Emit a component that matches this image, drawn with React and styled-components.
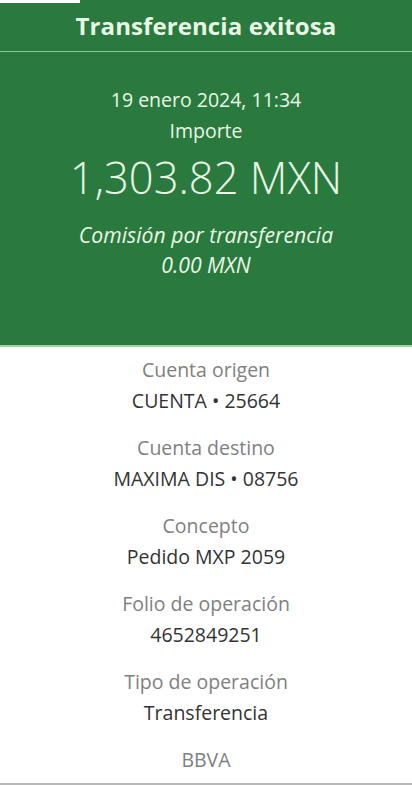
import React from 'react'
import styled, { createGlobalStyle } from 'styled-components'

const GlobalStyle = createGlobalStyle`
  html, body {
    margin: 0;
    padding: 0;
    background: #fff;
  }
  body {
    font-family: 'Open Sans', 'Liberation Sans', sans-serif;
  }
`

const Page = styled.div`
  width: 412px;
  height: 785px;
  display: flex;
  flex-direction: column;
  background: #fff;
  overflow: hidden;
  border-bottom: 2px solid #b8b8b8;
  box-sizing: border-box;
`

const Hero = styled.section`
  position: relative;
  background: #2a7a3f;
  color: #e9f8e4;
  border-bottom: 2px solid #9fd3a0;
  height: 347px;
  box-sizing: border-box;
  display: flex;
  flex-direction: column;
  align-items: center;
`

const Notch = styled.div`
  position: absolute;
  top: 0;
  left: 0;
  width: 80px;
  height: 3px;
  background: #fff;
`

const TitleBar = styled.header`
  align-self: stretch;
  height: 51px;
  border-bottom: 1px solid #8fc596;
  display: flex;
  align-items: center;
  justify-content: center;
  font-size: 24px;
  font-weight: 700;
  letter-spacing: 0.1px;
`

const Line = styled.div`
  font-size: ${(p) => p.$size || 19.5}px;
  font-weight: ${(p) => p.$weight || 400};
  font-style: ${(p) => (p.$italic ? 'italic' : 'normal')};
  line-height: ${(p) => p.$lh || 30}px;
  margin-top: ${(p) => p.$mt || 0}px;
`

const Details = styled.section`
  display: flex;
  flex-direction: column;
  align-items: center;
  padding-top: 8px;
`

const Field = styled.div`
  display: flex;
  flex-direction: column;
  align-items: center;
  height: 78px;
`

const Label = styled.div`
  font-size: 19.5px;
  line-height: 30px;
  color: #808080;
  font-weight: 400;
`

const Value = styled.div`
  font-size: 19.5px;
  line-height: 32px;
  color: #333;
`

const fields = [
  ['Cuenta origen', 'CUENTA • 25664'],
  ['Cuenta destino', 'MAXIMA DIS • 08756'],
  ['Concepto', 'Pedido MXP 2059'],
  ['Folio de operación', '4652849251'],
  ['Tipo de operación', 'Transferencia'],
]

export default function App() {
  return (
    <>
      <GlobalStyle />
      <Page>
        <Hero>
          <Notch />
          <TitleBar>Transferencia exitosa</TitleBar>
          <Line $mt={33}>19 enero 2024, 11:34</Line>
          <Line $mt={1}>Importe</Line>
          <Line $size={43.5} $weight={300} $lh={56} $mt={4}>
            1,303.82 MXN
          </Line>
          <Line $italic $size={21.2} $mt={14}>Comisión por transferencia</Line>
          <Line $italic $size={21.2}>0.00 MXN</Line>
        </Hero>
        <Details>
          {fields.map(([label, value]) => (
            <Field key={label}>
              <Label>{label}</Label>
              <Value>{value}</Value>
            </Field>
          ))}
          <Label>BBVA</Label>
        </Details>
      </Page>
    </>
  )
}
